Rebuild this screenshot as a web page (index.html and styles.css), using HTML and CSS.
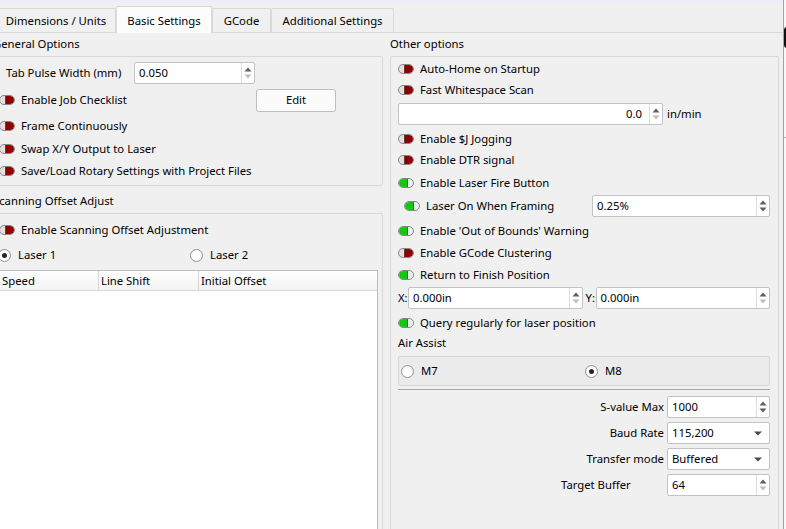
FILE: index.html
```html
<!DOCTYPE html>
<html>
<head>
<meta charset="utf-8">
<title>Basic Settings</title>
<link rel="stylesheet" href="styles.css">
</head>
<body>
<div class="window">
  <div class="main">
    <div class="topband"></div>
    <div class="tabbar">
      <div class="tab t1">Dimensions / Units</div>
      <div class="tab t2 active">Basic Settings</div>
      <div class="tab t3">GCode</div>
      <div class="tab t4">Additional Settings</div>
    </div>
    <div class="pane">
      <div class="col left">
        <div class="gtitle">General Options</div>
        <div class="group general">
          <div class="row pulse">
            <span class="flabel">Tab Pulse Width (mm)</span>
            <div class="spin w-pulse"><span class="v">0.050</span><span class="arr"><svg width="12" height="20" viewBox="0 0 12 20"><path class="up" d="M2.5 8.5 6 4.5 9.5 8.5Z"/><path class="dn dis" d="M2.5 11.5 6 15.5 9.5 11.5Z"/></svg></span></div>
          </div>
          <div class="row">
            <div class="check w-job"><span class="tog off"></span>Enable Job Checklist</div>
            <button class="btn">Edit</button>
          </div>
          <div class="row"><div class="check"><span class="tog off"></span>Frame Continuously</div></div>
          <div class="row"><div class="check"><span class="tog off"></span>Swap X/Y Output to Laser</div></div>
          <div class="row"><div class="check"><span class="tog off"></span>Save/Load Rotary Settings with Project Files</div></div>
        </div>
        <div class="gtitle second">Scanning Offset Adjust</div>
        <div class="group scan">
          <div class="row"><div class="check"><span class="tog off"></span>Enable Scanning Offset Adjustment</div></div>
          <div class="row radios">
            <div class="ritem first"><span class="radio on"></span>Laser 1</div>
            <div class="ritem"><span class="radio"></span>Laser 2</div>
          </div>
          <div class="table">
            <div class="thead">
              <div class="th c1">Speed</div>
              <div class="th c2">Line Shift</div>
              <div class="th c3">Initial Offset</div>
            </div>
            <div class="tbody"></div>
          </div>
        </div>
      </div>
      <div class="col right">
        <div class="gtitle">Other options</div>
        <div class="group other">
          <div class="row"><div class="check"><span class="tog off"></span>Auto-Home on Startup</div></div>
          <div class="row"><div class="check"><span class="tog off"></span>Fast Whitespace Scan</div></div>
          <div class="row">
            <div class="spin w-scan"><span class="v r">0.0</span><span class="arr"><svg width="12" height="20" viewBox="0 0 12 20"><path class="up" d="M2.5 8.5 6 4.5 9.5 8.5Z"/><path class="dn dis" d="M2.5 11.5 6 15.5 9.5 11.5Z"/></svg></span></div>
            <span class="unit">in/min</span>
          </div>
          <div class="row"><div class="check"><span class="tog off"></span>Enable $J Jogging</div></div>
          <div class="row"><div class="check"><span class="tog off"></span>Enable DTR signal</div></div>
          <div class="row"><div class="check"><span class="tog on"></span>Enable Laser Fire Button</div></div>
          <div class="row">
            <div class="check indent"><span class="tog on"></span>Laser On When Framing</div>
            <div class="spin w-frame"><span class="v">0.25%</span><span class="arr"><svg width="12" height="20" viewBox="0 0 12 20"><path class="up" d="M2.5 8.5 6 4.5 9.5 8.5Z"/><path class="dn" d="M2.5 11.5 6 15.5 9.5 11.5Z"/></svg></span></div>
          </div>
          <div class="row"><div class="check"><span class="tog on"></span>Enable 'Out of Bounds' Warning</div></div>
          <div class="row"><div class="check"><span class="tog off"></span>Enable GCode Clustering</div></div>
          <div class="row"><div class="check"><span class="tog on"></span>Return to Finish Position</div></div>
          <div class="row xy">
            <span class="axis">X:</span>
            <div class="spin grow"><span class="v">0.000in</span><span class="arr"><svg width="12" height="20" viewBox="0 0 12 20"><path class="up" d="M2.5 8.5 6 4.5 9.5 8.5Z"/><path class="dn dis" d="M2.5 11.5 6 15.5 9.5 11.5Z"/></svg></span></div>
            <span class="axis y">Y:</span>
            <div class="spin grow"><span class="v">0.000in</span><span class="arr"><svg width="12" height="20" viewBox="0 0 12 20"><path class="up" d="M2.5 8.5 6 4.5 9.5 8.5Z"/><path class="dn dis" d="M2.5 11.5 6 15.5 9.5 11.5Z"/></svg></span></div>
          </div>
          <div class="row"><div class="check"><span class="tog on"></span>Query regularly for laser position</div></div>
          <div class="row"><span class="label">Air Assist</span></div>
          <div class="airbox">
            <div class="ritem m7"><span class="radio"></span>M7</div>
            <div class="ritem"><span class="radio on"></span>M8</div>
          </div>
          <div class="sep"></div>
          <div class="form">
            <span class="fl">S-value Max</span>
            <div class="spin"><span class="v">1000</span><span class="arr"><svg width="12" height="20" viewBox="0 0 12 20"><path class="up" d="M2.5 8.5 6 4.5 9.5 8.5Z"/><path class="dn" d="M2.5 11.5 6 15.5 9.5 11.5Z"/></svg></span></div>
            <span class="fl">Baud Rate</span>
            <div class="combo"><span class="v">115,200</span><svg class="drop" width="8" height="5" viewBox="0 0 8 5"><path d="M0 0.5H8L4 4.5Z"/></svg></div>
            <span class="fl">Transfer mode</span>
            <div class="combo"><span class="v">Buffered</span><svg class="drop" width="8" height="5" viewBox="0 0 8 5"><path d="M0 0.5H8L4 4.5Z"/></svg></div>
            <span class="fl leftal">Target Buffer</span>
            <div class="spin"><span class="v">64</span><span class="arr"><svg width="12" height="20" viewBox="0 0 12 20"><path class="up" d="M2.5 8.5 6 4.5 9.5 8.5Z"/><path class="dn dis" d="M2.5 11.5 6 15.5 9.5 11.5Z"/></svg></span></div>
          </div>
        </div>
      </div>
    </div>
  </div>
  <div class="side">
    <div class="blob"></div>
    <div class="hline"></div>
  </div>
</div>
</body>
</html>
```

FILE: styles.css
```css
* { box-sizing: border-box; }
html, body { margin: 0; padding: 0; }
body {
  width: 786px;
  height: 529px;
  overflow: hidden;
  background: #f0f0f0;
  font-family: "Noto Sans", "Open Sans", sans-serif;
  font-size: 11.3px;
  line-height: 16px;
  color: #000;
}
.window { display: flex; height: 529px; }
.main { width: 783px; flex: none; overflow: hidden; }
.side {
  flex: 1;
  border-left: 1px solid #a3a3a3;
  background: #f8f8f8;
  position: relative;
}
.side .blob {
  position: absolute; left: 0; top: 27px;
  width: 3px; height: 21px;
  background: #111; border-radius: 3px 0 0 3px;
}
.side .hline {
  position: absolute; left: 0; right: 0; top: 137px;
  border-top: 1px solid #b0b0b0;
}

/* tabs */
.topband { height: 3px; background: #eaf0f6; }
.tabbar {
  height: 30px;
  display: flex;
  align-items: flex-end;
  border-bottom: 1px solid #d9d9d9;
}
.tab {
  height: 24px;
  border: 1px solid #d9d9d9;
  border-bottom: none;
  border-radius: 2px 2px 0 0;
  background: #f0f0f0;
  text-align: center;
  padding-top: 4px;
  white-space: nowrap;
  flex: none;
}
.tab.t1 { width: 124px; margin-left: -8px; padding-left: 4px; }
.tab.t2 { width: 96px; }
.tab.t3 { width: 59px; }
.tab.t4 { width: 123px; }
.tab.active {
  height: 27px;
  margin-bottom: -1px;
  padding-top: 6px;
  background: #fcfcfc;
  position: relative;
}

/* pane */
.pane {
  display: flex;
  gap: 7px;
  margin-left: -9px;
  height: 510px;
}
.col { display: flex; flex-direction: column; flex: none; }
.col.left { width: 392px; }
.col.right { width: 389px; }
.gtitle { padding: 3px 0 4px; white-space: nowrap; }
.col.left .gtitle { padding-left: 2px; }
.gtitle.second { padding-top: 7px; }
.group {
  border: 1px solid #d8d8d8;
  border-radius: 2px;
  padding-left: 7px;
}
.row { display: flex; align-items: center; min-width: 0; }

.general {
  display: grid;
  grid-template-rows: 32px 22px 30px 16px 28px;
  padding-right: 4px;
}
.pulse { padding-left: 7px; }
.flabel { width: 128px; flex: none; white-space: nowrap; }
.w-pulse { width: 121px; }
.w-job { width: 258px; }

.scan {
  flex: 1;
  display: grid;
  grid-template-rows: 32px 18px 1fr;
  padding-right: 4px;
}
.radios .ritem.first { margin-left: -1px; width: 192px; }

.other {
  flex: 1;
  display: grid;
  grid-template-rows: 24px 18px 30px 20px 22px 24px 22px 28px 16px 27px 20px 29px 12px auto auto auto;
  align-content: start;
  padding-right: 8px;
}

/* check toggles */
.check {
  display: flex;
  align-items: center;
  gap: 6px;
  white-space: nowrap;
  flex: none;
}
.check.indent { margin-left: 6px; }
.tog {
  width: 16px;
  height: 10px;
  flex: none;
  border: 1px solid #878787;
  border-radius: 5px;
  position: relative;
  background: #e6dede;
  overflow: hidden;
}
.tog.off::after {
  content: "";
  position: absolute;
  right: 0; top: 0; bottom: 0;
  width: 8px;
  background: #8e0000;
  border-left: 1px solid #6a3a3a;
  border-radius: 0 4px 4px 0;
}
.tog.on { background: #eef2ee; }
.tog.on::before {
  content: "";
  position: absolute;
  left: 0; top: 0; bottom: 0;
  width: 8px;
  background: #12c912;
  border-right: 1px solid #3d6a3d;
  border-radius: 4px 0 0 4px;
}

/* spinbox */
.spin {
  display: flex;
  height: 22px;
  flex: none;
  background: #fff;
  border: 1px solid #c3c3c3;
  border-radius: 2px;
}
.spin .v {
  flex: 1;
  padding: 0 4px;
  line-height: 20px;
  white-space: nowrap;
  overflow: hidden;
}
.spin .v.r { text-align: right; padding-right: 7px; }
.spin .arr {
  width: 13px;
  flex: none;
  border-left: 1px solid #dddddd;
  display: flex;
  align-items: center;
  justify-content: center;
}
.spin .arr svg { display: block; }
.up, .dn { fill: #5f5f5f; }
.dn.dis, .up.dis { fill: #bdbdbd; }
.spin.grow { flex: 1; }
.w-scan { width: 265px; }
.w-frame { width: 178px; margin-left: auto; }
.unit { margin-left: 4px; white-space: nowrap; }
.axis { width: 10px; flex: none; }
.axis.y { margin-left: 3px; }

/* button */
.btn {
  width: 80px;
  height: 23px;
  margin-left: -1px;
  border: 1px solid #bdbdbd;
  border-radius: 3px;
  background: #fbfbfb;
  font: inherit;
  color: #000;
  padding: 0;
}

/* radio */
.ritem { display: flex; align-items: center; gap: 7px; white-space: nowrap; flex: none; }
.radio {
  width: 13px; height: 13px;
  flex: none;
  border-radius: 50%;
  border: 1px solid #8f8f8f;
  background: #fff;
  position: relative;
}
.radio.on::after {
  content: "";
  position: absolute;
  left: 3px; top: 3px;
  width: 5px; height: 5px;
  border-radius: 50%;
  background: #262626;
}

/* table */
.table {
  margin-top: 6px;
  border: 1px solid #bdbdbd;
  background: #fff;
  display: flex;
  flex-direction: column;
}
.thead {
  display: flex;
  height: 20px;
  flex: none;
  background: linear-gradient(#ffffff, #f3f3f3);
  border-bottom: 1px solid #d6d6d6;
}
.th {
  padding-left: 2px;
  line-height: 19px;
  border-right: 1px solid #d6d6d6;
  white-space: nowrap;
}
.th.c1 { width: 99px; }
.th.c2 { width: 100px; }
.th.c3 { flex: 1; border-right: none; }
.tbody { flex: 1; }

/* air assist */
.label { white-space: nowrap; }
.airbox {
  margin-top: 7px;
  height: 30px;
  border: 1px solid #d6d6d6;
  border-radius: 2px;
  background: #ebebeb;
  display: flex;
  align-items: center;
  padding-left: 2px;
}
.airbox .m7 { width: 184px; }
.sep { margin-top: 3px; border-top: 1px solid #a9a9a9; }

/* form */
.form {
  margin-top: 6px;
  display: grid;
  grid-template-columns: 103px 103px;
  grid-auto-rows: 22px;
  column-gap: 3px;
  row-gap: 4px;
  justify-content: end;
}
.fl { text-align: right; line-height: 22px; white-space: nowrap; }
.fl.leftal { text-align: left; }
.combo {
  display: flex;
  align-items: center;
  height: 22px;
  background: #fff;
  border: 1px solid #c3c3c3;
  border-radius: 2px;
  padding: 0 7px 0 4px;
}
.combo .v { flex: 1; white-space: nowrap; }
.drop { fill: #4a4a4a; display: block; }
```
